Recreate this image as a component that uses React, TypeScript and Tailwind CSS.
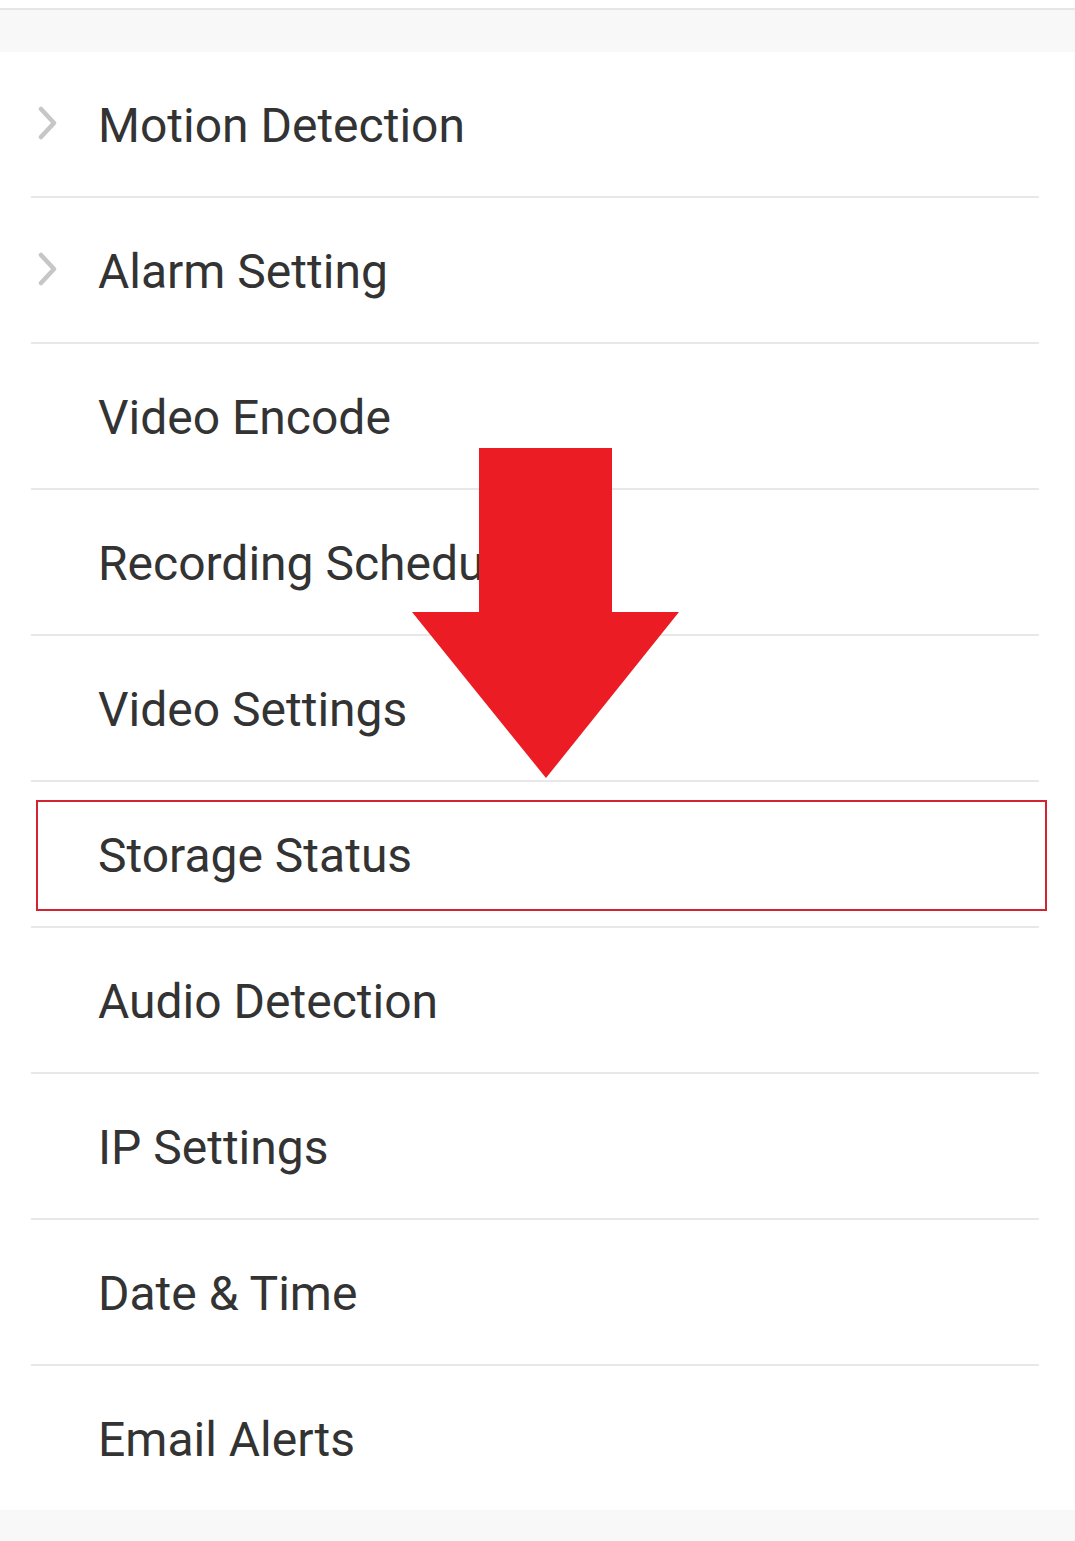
const ITEMS = [
  { label: "Motion Detection", chevron: true },
  { label: "Alarm Setting", chevron: true },
  { label: "Video Encode" },
  { label: "Recording Schedule" },
  { label: "Video Settings" },
  { label: "Storage Status", highlight: true },
  { label: "Audio Detection" },
  { label: "IP Settings" },
  { label: "Date & Time" },
  { label: "Email Alerts" },
]

function Chevron() {
  return (
    <svg width="24" height="34" viewBox="0 0 24 34" className="-mt-[6px] shrink-0">
      <path d="M4 3 L17 17 L4 31" fill="none" stroke="#c6c6c6" strokeWidth="4.5" strokeLinecap="round" strokeLinejoin="round" />
    </svg>
  )
}

export default function App() {
  return (
    <div className="relative h-[1541px] w-[1075px] overflow-hidden bg-white font-['Roboto',sans-serif]">
      <div className="h-2 bg-white" />
      <div className="h-[2px] bg-[#e6e6e6]" />
      <div className="h-[42px] bg-[#f8f8f8]" />
      <ul className="bg-white">
        {ITEMS.map((item, i) => (
          <li key={item.label} className="relative">
            <div className="flex h-[144px] items-center pt-[4px]">
              <div className="flex w-[98px] pl-[37px]">{item.chevron && <Chevron />}</div>
              <span className="text-[48px] leading-none text-[#333333]">{item.label}</span>
            </div>
            {i < ITEMS.length - 1 && <div className="ml-[31px] h-[2px] w-[1008px] bg-[#e8e8e8]" />}
            {item.highlight && (
              <div className="absolute left-[36px] top-[18px] h-[111px] w-[1011px] border-2 border-[#d42330]" />
            )}
          </li>
        ))}
      </ul>
      <div className="h-[31px] bg-[#f8f8f8]" />

      {/* big red arrow pointing at Storage Status */}
      <svg className="absolute left-[412px] top-[448px]" width="268" height="332" viewBox="0 0 268 332">
        <polygon points="67,0 200,0 200,164 267,164 134,330 0,164 67,164" fill="#ec1c24" />
      </svg>
    </div>
  )
}
